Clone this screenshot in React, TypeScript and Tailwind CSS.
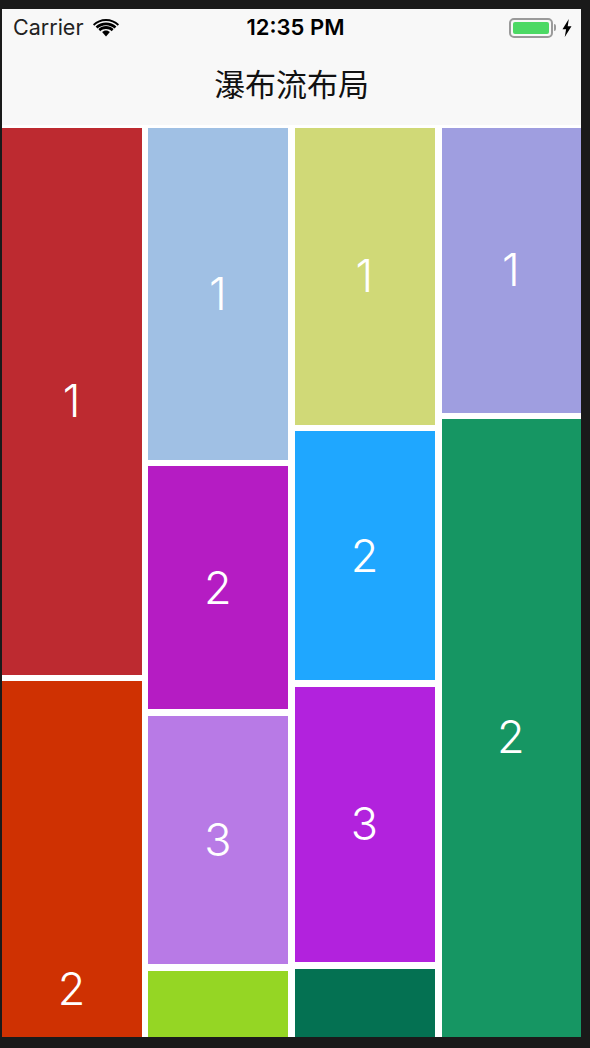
const columns = [
  {
    width: "w-[140px]",
    tiles: [
      { n: "1", h: "h-[547px]", c: "bg-[#bd2a30]" },
      { n: "2", h: "h-[616px]", c: "bg-[#cf3102]" },
    ],
  },
  {
    width: "w-[140px]",
    tiles: [
      { n: "1", h: "h-[332px]", c: "bg-[#a0c0e4]" },
      { n: "2", h: "h-[243px]", c: "bg-[#b51cc3]" },
      { n: "3", h: "h-[248.4px]", c: "bg-[#b87ae6]" },
      { n: "", h: "h-[200px]", c: "bg-[#95d624]" },
    ],
  },
  {
    width: "w-[140.4px]",
    tiles: [
      { n: "1", h: "h-[297px]", c: "bg-[#d0d977]" },
      { n: "2", h: "h-[249px]", c: "bg-[#1fa7ff]" },
      { n: "3", h: "h-[275.4px]", c: "bg-[#b222dd]" },
      { n: "", h: "h-[200px]", c: "bg-[#047152]" },
    ],
  },
  {
    width: "w-[139.4px]",
    tiles: [
      { n: "1", h: "h-[285px]", c: "bg-[#9f9ee0]" },
      { n: "2", h: "h-[636px]", c: "bg-[#169663]" },
    ],
  },
]

export default function App() {
  return (
    <div className="h-[1048px] w-[590px] overflow-hidden bg-[#1a1a1a] pt-[9px] pr-[9px] pb-[11px] pl-[2px] font-['Inter','Noto_Sans_CJK_SC',sans-serif]">
      <div className="flex h-full flex-col overflow-hidden bg-white">
        {/* Status + nav bar */}
        <header className="h-[116px] shrink-0 bg-[#f8f8f8] text-black">
          <div className="flex h-[37px] items-center justify-between pr-[9px] pl-[11px]">
            <div className="flex w-[153px] items-center gap-[10px] text-[21.5px] text-[#222]">
              <span>Carrier</span>
              <svg viewBox="0 0 26 19" className="h-[19px] w-[26px]" fill="black">
                <path d="M13 3c-4.600 0-8.700 1.800-11.800 4.700L0 6.300C3.400 2.900 8 .9 13 .9s9.600 2 13 5.400l-1.200 1.400C21.700 4.800 17.600 3 13 3z" />
                <path d="M13 7.200c-3.300 0-6.300 1.300-8.600 3.400L2.600 8.500C5.400 6 9 4.500 13 4.500s7.600 1.500 10.400 4l-1.800 2.100c-2.300-2.100-5.300-3.400-8.600-3.400z" />
                <path d="M13 11c-2.200 0-4.200.8-5.800 2.200L5.400 11c2-1.800 4.700-2.900 7.600-2.900s5.600 1.100 7.600 2.900l-1.800 2.200C17.200 11.800 15.200 11 13 11z" />
                <path d="M13 12.500c1.500 0 2.900.6 3.900 1.500L13 18.500 9.100 14c1-.9 2.400-1.500 3.900-1.500z" />
              </svg>
            </div>
            <span className="text-[22px] font-semibold">12:35 PM</span>
            <div className="flex w-[147px] items-center justify-end gap-[6px]">
              <div className="flex items-center gap-[1px]">
                <div className="h-[20px] w-[44px] rounded-[5px] border-2 border-[#9a9a9a] p-[2px]">
                  <div className="h-full w-full rounded-[2px] bg-[#4cd964]" />
                </div>
                <div className="h-[7px] w-[2px] rounded-r-[2px] bg-[#9a9a9a]" />
              </div>
              <svg viewBox="0 0 10 20" className="h-[18px] w-[10px]" fill="black">
                <path d="M7 0 0 11.500h4L2.500 20 10 8H5.800z" />
              </svg>
            </div>
          </div>
          <h1 className="mt-[3px] text-center text-[31px] leading-[72px] text-[#111]">瀑布流布局</h1>
        </header>

        {/* Waterfall */}
        <div className="flex min-h-0 flex-1 gap-[6.4px] overflow-hidden pt-[3px]">
          {columns.map((col, i) => (
            <div key={i} className={`flex shrink-0 flex-col gap-[6.4px] ${col.width}`}>
              {col.tiles.map((tile, j) => (
                <div
                  key={j}
                  className={`flex shrink-0 items-center justify-center pr-[1px] pb-[1px] text-[45px] font-[350] text-white ${tile.h} ${tile.c}`}
                >
                  {tile.n}
                </div>
              ))}
            </div>
          ))}
        </div>
      </div>
    </div>
  )
}
